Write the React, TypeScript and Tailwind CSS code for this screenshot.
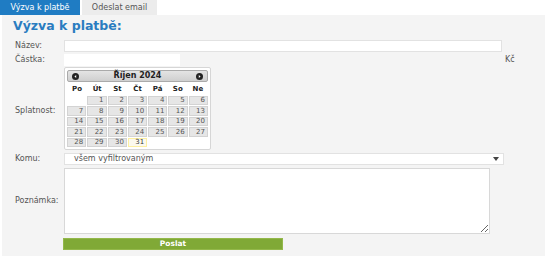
const days = ["Po", "Út", "St", "Čt", "Pá", "So", "Ne"];
const cells: (number | null)[] = [null, ...Array.from({ length: 31 }, (_, i) => i + 1)];

function NavIcon({ dir }: { dir: "prev" | "next" }) {
  return (
    <svg width="7" height="7" viewBox="0 0 8 8">
      <circle cx="4" cy="4" r="4" fill="#222" />
      {dir === "prev" ? (
        <path d="M4.8 2.2 L2.8 4 L4.8 5.8 Z" fill="#fff" />
      ) : (
        <path d="M3.2 2.2 L5.2 4 L3.2 5.8 Z" fill="#fff" />
      )}
    </svg>
  );
}

function Calendar() {
  return (
    <div className="flex h-[83px] w-[147px] flex-col rounded-[2px] border border-[#d6d6d6] bg-white p-[2px]">
      <div className="flex h-[12px] items-center justify-between rounded-[2px] border border-[#aaaaaa] bg-gradient-to-b from-[#e4e4e4] to-[#cfcfcf] px-[4px]">
        <NavIcon dir="prev" />
        <span className="text-[8px] font-bold text-[#222]">Říjen 2024</span>
        <NavIcon dir="next" />
      </div>
      <div className="grid h-[16px] grid-cols-7 items-center pt-[1px]">
        {days.map((d) => (
          <span key={d} className="text-center text-[7px] font-bold text-[#222]">
            {d}
          </span>
        ))}
      </div>
      <div className="grid grid-cols-7 gap-x-[1px] gap-y-[1px]">
        {cells.map((n, i) =>
          n === null ? (
            <span key={i} className="h-[9.5px]" />
          ) : (
            <span
              key={i}
              className={
                n === 31
                  ? "flex h-[9.5px] items-center justify-end border border-[#fcefa1] bg-[#fbf9ee] pr-[2px] text-[7px] text-[#363636]"
                  : "flex h-[9.5px] items-center justify-end border border-[#d3d3d3] bg-[#e6e6e6] pr-[2px] text-[7px] text-[#555]"
              }
            >
              {n}
            </span>
          )
        )}
      </div>
    </div>
  );
}

export default function App() {
  return (
    <div className="h-[262px] w-[545px] overflow-hidden bg-white font-['DejaVu_Sans',sans-serif] text-[8px] text-[#555]">
      <div className="flex h-[15px] gap-[2px]">
        <div className="flex w-[80px] items-center justify-center bg-[#1f7cc3] text-white">Výzva k platbě</div>
        <div className="flex w-[75px] items-center justify-center bg-[#ececec] text-[#555]">Odeslat email</div>
      </div>
      <div className="ml-[2px] h-[241px] bg-[#f4f4f4] pl-[11px] pt-[3px]">
        <h1 className="h-[16px] text-[12.5px] font-bold leading-[16px] text-[#2a7cc0]">Výzva k platbě:</h1>

        <div className="mt-[6px] flex h-[12px] items-center">
          <label className="w-[51px] pl-[2px]">Název:</label>
          <div className="h-[12px] w-[438px] border border-[#e2e2e2] bg-white" />
        </div>

        <div className="mt-[2px] flex h-[12px] items-center">
          <label className="w-[51px] pl-[2px]">Částka:</label>
          <div className="h-[12px] w-[116px] bg-white" />
          <span className="ml-[325px]">Kč</span>
        </div>

        <div className="mt-[1px] flex items-center">
          <label className="w-[51px] pl-[2px] pt-[4px]">Splatnost:</label>
          <Calendar />
        </div>

        <div className="mt-[3px] flex h-[12px] items-center">
          <label className="w-[51px] pl-[2px]">Komu:</label>
          <div className="flex h-[12px] w-[440px] items-center justify-between border border-[#e2e2e2] bg-white pl-[9px] pr-[4px] text-[#555]">
            <span>všem vyfiltrovaným</span>
            <svg width="6" height="4" viewBox="0 0 6 4">
              <path d="M0 0 H6 L3 4 Z" fill="#444" />
            </svg>
          </div>
        </div>

        <div className="mt-[3px] flex h-[66px] items-center">
          <label className="w-[51px] pl-[2px]">Poznámka:</label>
          <textarea className="h-[66px] w-[426px] resize border border-[#d8d8d8] bg-white outline-none" />
        </div>

        <div className="mt-[4px] flex">
          <div className="w-[50px]" />
          <button className="flex h-[12px] w-[220px] items-center justify-center border border-[#93b84a] bg-[#80a936] text-[7.5px] font-bold text-white">
            Poslat
          </button>
        </div>
      </div>
    </div>
  );
}
